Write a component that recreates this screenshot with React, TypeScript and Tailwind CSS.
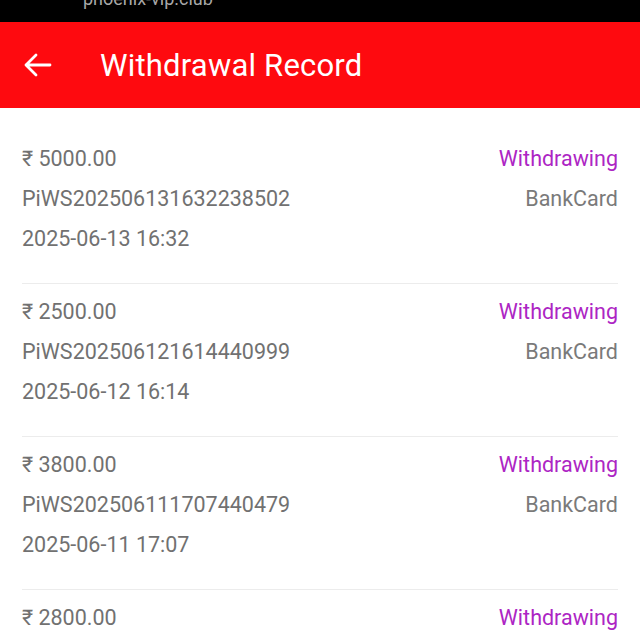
import React from "react";

type Record = {
  amount: string;
  orderNo: string;
  time: string;
  status: string;
  method: string;
};

const records: Record[] = [
  { amount: "5000.00", orderNo: "PiWS202506131632238502", time: "2025-06-13 16:32", status: "Withdrawing", method: "BankCard" },
  { amount: "2500.00", orderNo: "PiWS202506121614440999", time: "2025-06-12 16:14", status: "Withdrawing", method: "BankCard" },
  { amount: "3800.00", orderNo: "PiWS202506111707440479", time: "2025-06-11 17:07", status: "Withdrawing", method: "BankCard" },
  { amount: "2800.00", orderNo: "PiWS202506101523118734", time: "2025-06-10 15:23", status: "Withdrawing", method: "BankCard" },
];

const RecordItem = ({ item }: { item: Record }) => {
  return (
    <div className="mx-[22px] border-b border-[#ececec] pt-[8px] pb-[24px] text-[21.5px] leading-[40px] text-[#717171]">
      <div className="flex justify-between">
        <span>₹ {item.amount}</span>
        <span className="text-[#ad25c4]">{item.status}</span>
      </div>
      <div className="flex justify-between">
        <span>{item.orderNo}</span>
        <span className="text-[#7a7a7a]">{item.method}</span>
      </div>
      <div>{item.time}</div>
    </div>
  );
};

export default function App() {
  return (
    <div className="h-[640px] w-[640px] overflow-hidden bg-white font-['Roboto',sans-serif]">
      {/* status bar with url peeking */}
      <div className="h-[22px] overflow-hidden bg-black pl-[83px]">
        <div className="-mt-[12px] text-[18px] leading-[22px] text-[#a8a8a8]">
          phoenix-vip.club
        </div>
      </div>

      {/* header */}
      <div className="flex h-[86px] items-center bg-[#fe0a0f] text-white">
        <svg
          className="ml-[23px] h-[30px] w-[30px]"
          viewBox="0 0 30 30"
          fill="none"
          stroke="currentColor"
          strokeWidth="2.8"
          strokeLinecap="round"
          strokeLinejoin="round"
        >
          <path d="M27 15H3M13 5L3 15l10 10" />
        </svg>
        <div className="ml-[47px] pt-[3px] text-[31px] tracking-[0.2px]">Withdrawal Record</div>
      </div>

      <div className="pt-[23px]">
        {records.map((r) => (
          <RecordItem key={r.orderNo} item={r} />
        ))}
      </div>
    </div>
  );
}
